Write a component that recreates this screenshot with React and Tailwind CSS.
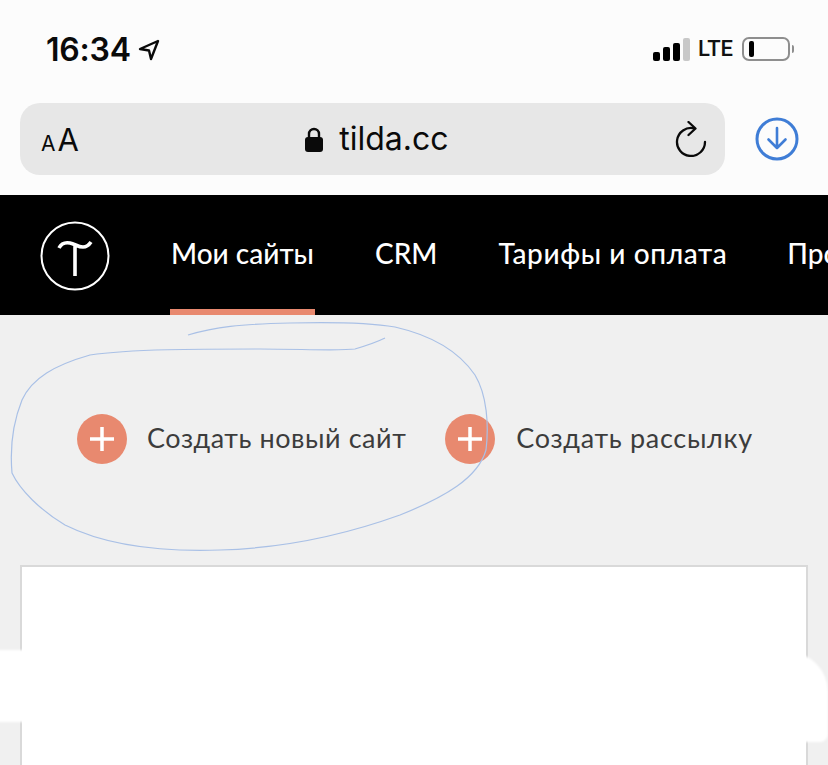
import React from "react";

function Plus() {
  return (
    <span className="flex h-[50px] w-[50px] shrink-0 items-center justify-center rounded-full bg-[#e8896f]">
      <svg viewBox="0 0 50 50" className="h-[50px] w-[50px]">
        <path d="M25 13v24M13 25h24" stroke="#fff" strokeWidth="3.5" fill="none" />
      </svg>
    </span>
  );
}

function StatusBar() {
  return (
    <div className="flex h-[103px] items-start justify-between pl-[46px] pr-[34px] pt-[31px]">
      <div className="flex items-center">
        <span className="font-['Inter',sans-serif] text-[32px] font-semibold leading-[38px] tracking-[-0.2px] text-[#0a0a0a]">16:34</span>
        <svg viewBox="0 0 22 22" className="ml-[7px] h-[22px] w-[22px]">
          <path d="M20 2 2 10l9 1.500L13 20z" fill="none" stroke="#0a0a0a" strokeWidth="2.4" strokeLinejoin="round" />
        </svg>
      </div>
      <div className="flex items-center pt-[6px]">
        <div className="flex items-end gap-[3px]">
          <span className="h-[9px] w-[7px] rounded-[2px] bg-black" />
          <span className="h-[14px] w-[7px] rounded-[2px] bg-black" />
          <span className="h-[18px] w-[7px] rounded-[2px] bg-black" />
          <span className="h-[23px] w-[7px] rounded-[2px] bg-[#c8c8c8]" />
        </div>
        <span className="ml-[8px] font-['Roboto',sans-serif] text-[22px] font-medium leading-[24px] text-[#111]">LTE</span>
        <div className="ml-[9px] flex h-[24px] w-[48px] items-center rounded-[7px] border-2 border-[#8e8e8e] pl-[5px]">
          <span className="h-[16px] w-[5px] rounded-[2px] bg-black" />
        </div>
        <span className="ml-[2px] h-[8px] w-[2px] rounded-r-[2px] bg-[#8e8e8e]" />
      </div>
    </div>
  );
}

function AddressBar() {
  return (
    <div className="flex h-[92px] items-start">
      <div className="ml-[20px] flex h-[72px] w-[705px] items-center justify-between rounded-[20px] bg-[#e7e7e7] pl-[21px] pr-[18px] text-[#0a0a0a]">
        <span className="flex items-baseline font-['Inter',sans-serif] leading-none">
          <span className="text-[21px]">A</span>
          <span className="ml-[2px] text-[31px]">A</span>
        </span>
        <span className="flex items-center">
          <svg viewBox="0 0 18 25" className="h-[25px] w-[18px]">
            <path d="M4 11V7a5 5 0 0 1 10 0v4" fill="none" stroke="#0a0a0a" strokeWidth="2.4" />
            <rect x="0" y="10" width="18" height="15" rx="3" fill="#0a0a0a" />
          </svg>
          <span className="ml-[16px] font-['Inter',sans-serif] text-[32px] leading-none">tilda.cc</span>
        </span>
        <svg viewBox="0 0 32 36" className="h-[36px] w-[32px]">
          <path d="M19 7.300A14 14 0 1 0 30 21" fill="none" stroke="#0a0a0a" strokeWidth="2.3" strokeLinecap="round" />
          <path d="M13.500 1 20.500 7.500 13.500 14" fill="none" stroke="#0a0a0a" strokeWidth="2.3" strokeLinecap="round" strokeLinejoin="round" />
        </svg>
      </div>
      <svg viewBox="0 0 44 44" className="ml-[30px] mt-[14px] h-[44px] w-[44px]">
        <circle cx="22" cy="22" r="20" fill="none" stroke="#3f7dd6" strokeWidth="3" />
        <path d="M22 11v20M13.500 22.500 22 31l8.500-8.500" fill="none" stroke="#3f7dd6" strokeWidth="2.6" strokeLinecap="round" strokeLinejoin="round" />
      </svg>
    </div>
  );
}

function TildaNav() {
  return (
    <nav className="flex h-[120px] items-stretch overflow-hidden bg-black pl-[40px] font-['Lato','Noto_Sans',sans-serif] text-[28px] font-medium text-white">
      <svg viewBox="0 0 70 70" className="mt-[26px] h-[70px] w-[70px] shrink-0">
        <circle cx="35" cy="35" r="33.500" fill="none" stroke="#fff" strokeWidth="2" />
        <path d="M19 27c2-4 6-6 11-5 5 1 8 4 13 4 4 0 6-2 8-5M35 25v30" fill="none" stroke="#fff" strokeWidth="3.6" />
      </svg>
      <div className="ml-[60px] flex h-full w-[145px] shrink-0 flex-col items-center border-b-[6px] border-[#e8896f]">
        <span className="mt-[40px] whitespace-nowrap leading-[36px]">Мои сайты</span>
      </div>
      <div className="ml-[60px] flex pt-[40px]">
        <span className="whitespace-nowrap leading-[36px]">CRM</span>
        <span className="ml-[61px] whitespace-nowrap leading-[36px] tracking-[0.6px]">Тарифы и оплата</span>
        <span className="ml-[60px] whitespace-nowrap leading-[36px]">Проекты</span>
      </div>
    </nav>
  );
}

function Actions() {
  return (
    <div className="flex pl-[77px] pt-[99px] font-['Lato','Noto_Sans',sans-serif] text-[27px] text-[#3c3c3c]">
      <div className="flex items-center">
        <Plus />
        <span className="ml-[20px] -translate-y-px whitespace-nowrap tracking-[0.55px]">Создать новый сайт</span>
      </div>
      <div className="ml-[39px] flex items-center">
        <Plus />
        <span className="ml-[21px] -translate-y-px whitespace-nowrap tracking-[0.7px]">Создать рассылку</span>
      </div>
    </div>
  );
}

export default function App() {
  return (
    <div className="relative h-[765px] w-[828px] overflow-hidden bg-[#f0f0f0]">
      <div className="bg-[#fcfcfc]">
        <StatusBar />
        <AddressBar />
      </div>
      <TildaNav />
      <Actions />
      <div className="mx-[20px] mt-[101px] h-[300px] border-2 border-[#d9d9d9] bg-white" />

      {/* white retouch smear over the card */}
      <div className="absolute left-[-30px] top-[650px] h-[72px] w-[560px] rounded-[24px] bg-white blur-[1px]" />
      <div className="absolute left-[500px] top-[652px] h-[90px] w-[328px] rounded-tr-[40px] rounded-br-[8px] bg-white blur-[1px]" />

      {/* pen scribble */}
      <svg viewBox="0 0 828 765" className="pointer-events-none absolute left-0 top-0 h-[765px] w-[828px]">
        <path
          d="M188 335C215 327 240 324 290 323C330 322 365 322 395 327C430 335 458 350 475 375C487 395 489 425 486 450C478 478 445 497 400 515C350 533 290 548 220 550C160 552 105 545 65 525C40 510 20 490 12 473C10 450 12 425 22 400C32 378 55 365 90 355C130 349 200 349 260 349C300 349 340 351 355 349C365 346 375 343 385 338"
          fill="none"
          stroke="#a9c0e6"
          strokeWidth="1.2"
        />
      </svg>
    </div>
  );
}
